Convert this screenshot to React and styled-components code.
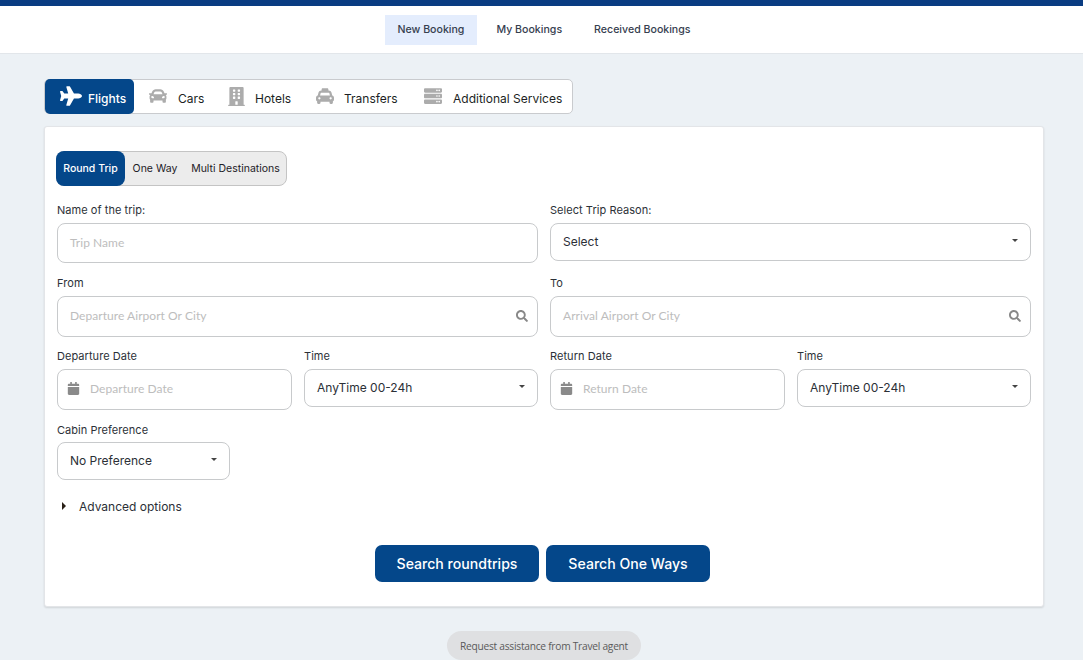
import React from "react"
import styled, { createGlobalStyle } from "styled-components"
import { FaPlane, FaCar, FaBuilding, FaTaxi, FaServer, FaSearch, FaCalendar } from "react-icons/fa"

const navy = "#04478a"

const GlobalStyle = createGlobalStyle`
    html, body {
        margin: 0;
        padding: 0;
        height: 660px;
        overflow: hidden;
        background: #ecf1f5;
        font-family: Inter, "Liberation Sans", sans-serif;
    }
    * { box-sizing: border-box; }
`

const TopBar = styled.div`
    height: 6px;
    background: #0a3c82;
`

const Nav = styled.nav`
    height: 48px;
    background: #fff;
    border-bottom: 1px solid #e2e6ea;
    display: flex;
    justify-content: center;
    padding: 9px 0 0 9px;
    gap: 3px;
`

const NavItem = styled.div`
    height: 30px;
    padding: 0 ${p => (p.$active ? 13 : 16)}px 1px ${p => (p.$active ? 12 : 16)}px;
    display: flex;
    align-items: center;
    font-size: 10.6px;
    font-weight: 500;
    color: #36404f;
    background: ${p => (p.$active ? "#e4edfd" : "transparent")};
`

const ReceivedItem = styled(NavItem)`
    margin-left: -3px;
`

const Page = styled.main`
    padding: 25px 39px 0 44px;
`

const ServiceTabs = styled.div`
    display: inline-flex;
    height: 35px;
    background: #fff;
    border: 1px solid #c9cbce;
    border-radius: 5px;
    vertical-align: top;
`

const ServiceTab = styled.div`
    display: flex;
    align-items: center;
    width: ${p => p.$w}px;
    padding-left: ${p => p.$pl}px;
    gap: ${p => p.$gap}px;
    font-size: 12px;
    color: ${p => (p.$active ? "#fff" : "#1c1f24")};
    font-weight: ${p => (p.$active ? 500 : 400)};
    background: ${p => (p.$active ? navy : "transparent")};
    border-radius: 5px;
    margin: -1px 0;
    svg {
        color: ${p => (p.$active ? "#fff" : "#acacac")};
        flex-shrink: 0;
        margin-top: -1px;
    }
    span {
        margin-top: 3px;
    }
`

const Card = styled.section`
    margin-top: 12px;
    height: 481px;
    background: #fff;
    border: 1px solid #e3e5e8;
    border-radius: 3px;
    box-shadow: 0 1px 2px rgba(0, 0, 0, 0.12);
    padding: 24px 12px 0;
`

const TripTabs = styled.div`
    display: inline-flex;
    height: 35px;
    margin-left: -1px;
    background: #ececec;
    border: 1px solid #c4c4c4;
    border-radius: 8px;
`

const TripTab = styled.div`
    display: flex;
    align-items: center;
    justify-content: center;
    width: ${p => p.$w}px;
    font-size: 10.5px;
    color: ${p => (p.$active ? "#fff" : "#1d2026")};
    font-weight: ${p => (p.$active ? 500 : 400)};
    background: ${p => (p.$active ? navy : "transparent")};
    border-radius: 8px;
    margin: ${p => (p.$active ? "-1px 0 -1px -1px" : "0")};
`

const Row = styled.div`
    display: grid;
    grid-template-columns: repeat(2, 1fr);
    gap: 12px;
    margin-top: ${p => p.$mt}px;
    width: 974px;
`

const Pair = styled.div`
    display: grid;
    grid-template-columns: 235px 234px;
    gap: 12px;
`

const Field = styled.div`
    display: flex;
    flex-direction: column;
    width: ${p => (p.$w ? `${p.$w}px` : "auto")};
`

const Label = styled.label`
    height: 13px;
    line-height: 13px;
    font-size: 11px;
    color: #2c3138;
    letter-spacing: 0.05px;
    margin-bottom: ${p => p.$mb || 6}px;
`

const Input = styled.div`
    height: ${p => p.$h || 41}px;
    display: flex;
    align-items: center;
    padding: 0 9px 2px 12px;
    background: #fff;
    border: 1px solid #c8cacc;
    border-radius: 8px;
    color: #bdbdbd;
    font-family: Lato, "Liberation Sans", sans-serif;
    font-size: 12px;
    letter-spacing: 0.05px;
    svg {
        color: #888;
        flex-shrink: 0;
    }
    span {
        flex: 1;
    }
`

const CalendarInput = styled(Input)`
    padding-left: 9px;
    gap: 10px;
    svg { color: #8a8a8a; }
`

const Select = styled.div`
    height: 38px;
    display: flex;
    align-items: center;
    justify-content: space-between;
    padding: 0 12px 1px 12px;
    background: #fff;
    border: 1px solid #c8cacc;
    border-radius: 8px;
    font-size: 12px;
    color: #2b2f36;
`

const Caret = styled.i`
    width: 0;
    height: 0;
    margin-top: -3px;
    border-left: 3.5px solid transparent;
    border-right: 3.5px solid transparent;
    border-top: 3.5px solid #444;
`

const Advanced = styled.div`
    display: flex;
    align-items: center;
    margin-top: 19px;
    margin-left: 5px;
    gap: 13px;
    font-size: 12px;
    line-height: 16px;
    color: #2b2f36;
`

const AdvancedArrow = styled.i`
    width: 0;
    height: 0;
    margin-top: -2px;
    border-top: 4px solid transparent;
    border-bottom: 4px solid transparent;
    border-left: 4px solid #2a2017;
`

const Actions = styled.div`
    display: flex;
    justify-content: center;
    gap: 7px;
    margin-top: 30px;
    width: 974px;
    padding-right: 3px;
`

const Button = styled.button`
    width: 164px;
    height: 37px;
    border: 0;
    border-radius: 7px;
    background: ${navy};
    color: #fff;
    font-family: Inter, "Liberation Sans", sans-serif;
    font-size: 14.1px;
    font-weight: 500;
`

const HelpWrap = styled.div`
    display: flex;
    justify-content: center;
    margin-top: 24px;
`

const HelpPill = styled.div`
    width: 194px;
    height: 29px;
    display: flex;
    align-items: center;
    justify-content: center;
    background: #dfe0e2;
    border-radius: 15px;
    font-family: "Open Sans", "Liberation Sans", sans-serif;
    font-size: 10.2px;
    letter-spacing: -0.25px;
    color: #5a5a5a;
`

const services = [
    { name: "Flights", Icon: FaPlane, size: 22, w: 89, pl: 15, gap: 6, active: true },
    { name: "Cars", Icon: FaCar, size: 18, w: 81, pl: 15, gap: 11 },
    { name: "Hotels", Icon: FaBuilding, size: 19, w: 87, pl: 12, gap: 9 },
    { name: "Transfers", Icon: FaTaxi, size: 18, w: 109, pl: 14, gap: 10 },
    { name: "Additional Services", Icon: FaServer, size: 18, w: 161, pl: 13, gap: 11 },
]

function App() {
    return (
        <>
            <GlobalStyle />
            <TopBar />
            <Nav>
                <NavItem $active>New Booking</NavItem>
                <NavItem>My Bookings</NavItem>
                <ReceivedItem>Received Bookings</ReceivedItem>
            </Nav>
            <Page>
                <ServiceTabs>
                    {services.map(({ name, Icon, size, w, pl, gap, active }) => (
                        <ServiceTab key={name} $w={w} $pl={pl} $gap={gap} $active={active}>
                            <Icon size={size} />
                            <span>{name}</span>
                        </ServiceTab>
                    ))}
                </ServiceTabs>
                <Card>
                    <TripTabs>
                        <TripTab $w={69} $active>Round Trip</TripTab>
                        <TripTab $w={60}>One Way</TripTab>
                        <TripTab $w={101}>Multi Destinations</TripTab>
                    </TripTabs>
                    <Row $mt={18}>
                        <Field>
                            <Label>Name of the trip:</Label>
                            <Input $h={40}>Trip Name</Input>
                        </Field>
                        <Field>
                            <Label>Select Trip Reason:</Label>
                            <Select>Select<Caret /></Select>
                        </Field>
                    </Row>
                    <Row $mt={14}>
                        <Field>
                            <Label>From</Label>
                            <Input><span>Departure Airport Or City</span><FaSearch size={12} /></Input>
                        </Field>
                        <Field>
                            <Label>To</Label>
                            <Input><span>Arrival Airport Or City</span><FaSearch size={12} /></Input>
                        </Field>
                    </Row>
                    <Row $mt={13}>
                        <Pair>
                            <Field>
                                <Label>Departure Date</Label>
                                <CalendarInput><FaCalendar size={13} />Departure Date</CalendarInput>
                            </Field>
                            <Field>
                                <Label>Time</Label>
                                <Select>AnyTime 00-24h<Caret /></Select>
                            </Field>
                        </Pair>
                        <Pair>
                            <Field>
                                <Label>Return Date</Label>
                                <CalendarInput><FaCalendar size={13} />Return Date</CalendarInput>
                            </Field>
                            <Field>
                                <Label>Time</Label>
                                <Select>AnyTime 00-24h<Caret /></Select>
                            </Field>
                        </Pair>
                    </Row>
                    <Row $mt={14}>
                        <Field $w={173}>
                            <Label $mb={5}>Cabin Preference</Label>
                            <Select>No Preference<Caret /></Select>
                        </Field>
                    </Row>
                    <Advanced><AdvancedArrow />Advanced options</Advanced>
                    <Actions>
                        <Button>Search roundtrips</Button>
                        <Button>Search One Ways</Button>
                    </Actions>
                </Card>
                <HelpWrap>
                    <HelpPill>Request assistance from Travel agent</HelpPill>
                </HelpWrap>
            </Page>
        </>
    )
}

export default App
